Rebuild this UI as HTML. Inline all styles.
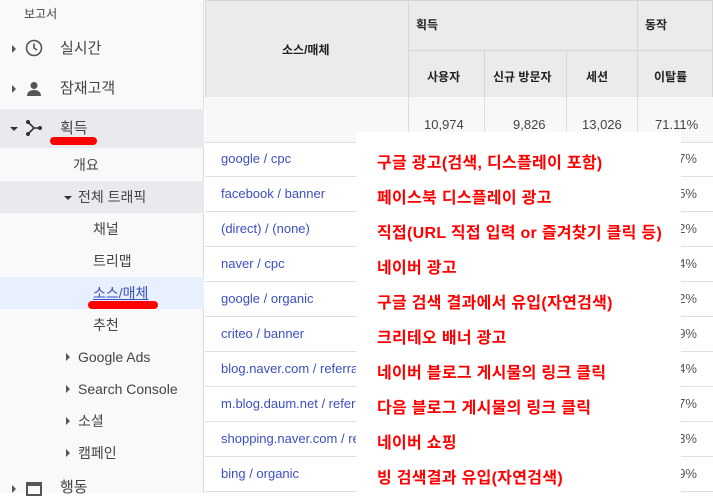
<!DOCTYPE html>
<html><head><meta charset="utf-8"><style>
*{margin:0;padding:0;box-sizing:border-box}
body{width:713px;height:493px;overflow:hidden;position:relative;background:#fff;font-family:"Liberation Sans","Noto Sans CJK KR",sans-serif}
.sb{position:absolute;left:0;top:0;width:204px;height:493px;background:#f8f9fa;border-right:1px solid #ddd}
.t{position:absolute;font-size:14px;color:#444;white-space:nowrap;line-height:18px}
.hl{position:absolute;left:0;width:204px}
.tri{position:absolute;width:0;height:0;border-top:4px solid transparent;border-bottom:4px solid transparent;border-left:4px solid #555}
.trd{position:absolute;width:0;height:0;border-left:4px solid transparent;border-right:4px solid transparent;border-top:4px solid #333}
.red{position:absolute;height:8px;background:#f00;border-radius:4px}
.c{position:absolute;border:1px solid #d6d6d6;background:#ebebeb}
.h{position:absolute;font-size:12px;font-weight:bold;color:#222;white-space:nowrap}
.row{position:absolute;left:205px;width:508px;height:35px;border-bottom:1px solid #e0e0e0}
.lk{position:absolute;left:221px;font-size:13px;color:#3c4fc1;white-space:nowrap}
.pc{position:absolute;right:16px;font-size:13px;color:#555}
.ov{position:absolute;left:356px;top:132px;width:325px;height:361px;background:#fff}
.rt{position:absolute;left:377px;font-size:16px;font-weight:bold;color:#f00;white-space:nowrap;letter-spacing:0.3px}
</style></head><body>
<div class="sb">
<div class="t" style="left:24px;top:5px;font-size:12px">보고서</div>
<div class="tri" style="left:12px;top:45px"></div>
<svg style="position:absolute;left:25px;top:39px" width="18" height="18" viewBox="0 0 18 18"><circle cx="9" cy="9" r="7.5" fill="none" stroke="#555" stroke-width="1.6"/><path d="M9 4.5V9l3 2" fill="none" stroke="#555" stroke-width="1.6"/></svg>
<div class="t" style="left:60px;top:40px;font-size:15px">실시간</div>
<div class="tri" style="left:12px;top:85px"></div>
<svg style="position:absolute;left:26px;top:81px" width="16" height="16" viewBox="0 0 16 16"><circle cx="8" cy="4.5" r="3.5" fill="#555"/><path d="M1 15c0-4 3-6 7-6s7 2 7 6z" fill="#555"/></svg>
<div class="t" style="left:60px;top:80px;font-size:15px">잠재고객</div>
<div class="hl" style="top:109px;height:39px;background:#e8eaed"></div>
<div class="trd" style="left:10px;top:127px"></div>
<svg style="position:absolute;left:25px;top:120px" width="18" height="16" viewBox="0 0 18 16"><path d="M3 2l6 6-6 6M9 8h6" fill="none" stroke="#333" stroke-width="1.6"/><circle cx="3" cy="2" r="2" fill="#333"/><circle cx="3" cy="14" r="2" fill="#333"/><circle cx="15" cy="8" r="2" fill="#333"/></svg>
<div class="t" style="left:60px;top:120px;font-size:15px">획득</div>
<div class="red" style="left:50px;top:137px;width:47px"></div>
<div class="t" style="left:73px;top:156px">개요</div>
<div class="hl" style="top:181px;height:32px;background:#e8eaed"></div>
<div class="trd" style="left:64px;top:196px"></div>
<div class="t" style="left:78px;top:188px">전체 트래픽</div>
<div class="t" style="left:93px;top:220px">채널</div>
<div class="t" style="left:93px;top:252px">트리맵</div>
<div class="hl" style="top:277px;height:32px;background:#e8f0fe"></div>
<div class="t" style="left:93px;top:284px;color:#3c4fc1;text-decoration:underline">소스/매체</div>
<div class="red" style="left:88px;top:301px;width:70px"></div>
<div class="t" style="left:93px;top:316px">추천</div>
<div class="tri" style="left:66px;top:353px"></div><div class="t" style="left:78px;top:348px">Google Ads</div>
<div class="tri" style="left:66px;top:385px"></div><div class="t" style="left:78px;top:380px">Search Console</div>
<div class="tri" style="left:66px;top:417px"></div><div class="t" style="left:78px;top:412px">소셜</div>
<div class="tri" style="left:66px;top:449px"></div><div class="t" style="left:78px;top:444px">캠페인</div>
<div class="tri" style="left:12px;top:485px"></div>
<div style="position:absolute;left:26px;top:482px;width:16px;height:14px;border:2px solid #555;border-top-width:4px"></div>
<div class="t" style="left:60px;top:479px;font-size:15px">행동</div>
</div>
<div class="c" style="left:205px;top:0;width:204px;height:98px"></div>
<div class="c" style="left:408px;top:0;width:230px;height:51px"></div>
<div class="c" style="left:637px;top:0;width:76px;height:51px"></div>
<div class="c" style="left:408px;top:50px;width:77px;height:48px"></div>
<div class="c" style="left:484px;top:50px;width:83px;height:48px"></div>
<div class="c" style="left:566px;top:50px;width:72px;height:48px"></div>
<div class="c" style="left:637px;top:50px;width:76px;height:48px"></div>
<div class="h" style="left:282px;top:41px">소스/매체</div>
<div class="h" style="left:416px;top:16px">획득</div>
<div class="h" style="left:645px;top:16px">동작</div>
<div class="h" style="left:427px;top:68px">사용자</div>
<div class="h" style="left:493px;top:68px">신규 방문자</div>
<div class="h" style="left:586px;top:68px">세션</div>
<div class="h" style="left:654px;top:68px">이탈률</div>
<div class="row" style="top:97px;height:46px;background:#f8f8f8"></div>
<div style="position:absolute;left:408px;top:97px;width:1px;height:46px;background:#ddd"></div>
<div style="position:absolute;left:484px;top:97px;width:1px;height:46px;background:#ddd"></div>
<div style="position:absolute;left:566px;top:97px;width:1px;height:46px;background:#ddd"></div>
<div style="position:absolute;left:637px;top:97px;width:1px;height:396px;background:#ddd"></div>
<div class="t" style="left:424px;top:116px;font-size:13px">10,974</div>
<div class="t" style="left:513px;top:116px;font-size:13px">9,826</div>
<div class="t" style="left:582px;top:116px;font-size:13px">13,026</div>
<div class="t" style="left:655px;top:116px;font-size:13px">71.11%</div>
<div class="row" style="top:142px"></div><div class="lk" style="top:151px">google / cpc</div><div class="pc" style="top:151px">7%</div>
<div class="row" style="top:177px"></div><div class="lk" style="top:186px">facebook / banner</div><div class="pc" style="top:186px">5%</div>
<div class="row" style="top:212px"></div><div class="lk" style="top:221px">(direct) / (none)</div><div class="pc" style="top:221px">2%</div>
<div class="row" style="top:247px"></div><div class="lk" style="top:256px">naver / cpc</div><div class="pc" style="top:256px">4%</div>
<div class="row" style="top:282px"></div><div class="lk" style="top:291px">google / organic</div><div class="pc" style="top:291px">2%</div>
<div class="row" style="top:317px"></div><div class="lk" style="top:326px">criteo / banner</div><div class="pc" style="top:326px">9%</div>
<div class="row" style="top:352px"></div><div class="lk" style="top:361px">blog.naver.com / referral</div><div class="pc" style="top:361px">4%</div>
<div class="row" style="top:387px"></div><div class="lk" style="top:396px">m.blog.daum.net / referral</div><div class="pc" style="top:396px">7%</div>
<div class="row" style="top:422px"></div><div class="lk" style="top:431px">shopping.naver.com / referral</div><div class="pc" style="top:431px">3%</div>
<div class="row" style="top:457px"></div><div class="lk" style="top:466px">bing / organic</div><div class="pc" style="top:466px">9%</div>
<div class="ov"></div>
<div class="rt" style="top:149px">구글 광고(검색, 디스플레이 포함)</div>
<div class="rt" style="top:184px">페이스북 디스플레이 광고</div>
<div class="rt" style="top:219px">직접(URL 직접 입력 or 즐겨찾기 클릭 등)</div>
<div class="rt" style="top:254px">네이버 광고</div>
<div class="rt" style="top:289px">구글 검색 결과에서 유입(자연검색)</div>
<div class="rt" style="top:324px">크리테오 배너 광고</div>
<div class="rt" style="top:359px">네이버 블로그 게시물의 링크 클릭</div>
<div class="rt" style="top:394px">다음 블로그 게시물의 링크 클릭</div>
<div class="rt" style="top:429px">네이버 쇼핑</div>
<div class="rt" style="top:464px">빙 검색결과 유입(자연검색)</div>
</body></html>
